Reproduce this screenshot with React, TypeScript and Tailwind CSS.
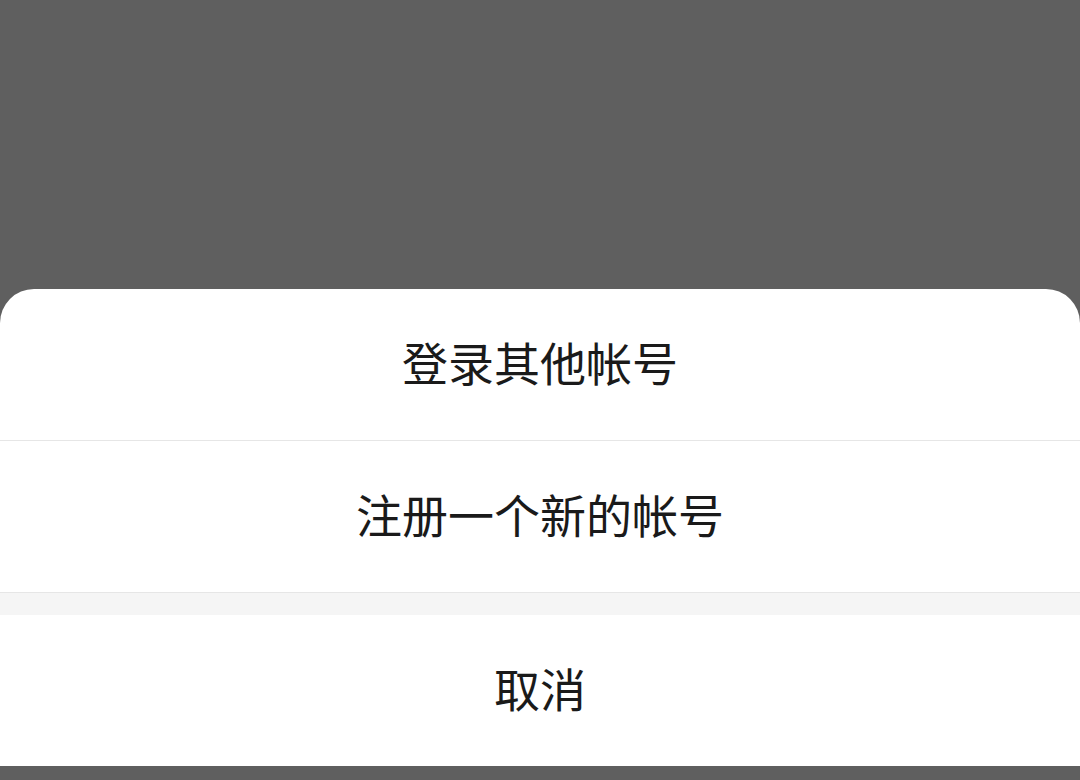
import { useState } from "react";

type Action = { id: string; label: string };

const actions: Action[] = [
  { id: "login", label: "登录其他帐号" },
  { id: "register", label: "注册一个新的帐号" },
];

export default function App() {
  const [picked, setPicked] = useState<string | null>(null);

  return (
    <div
      className="h-[780px] w-full bg-[#5f5f5f] flex flex-col overflow-hidden"
      style={{ fontFamily: '"Noto Sans CJK SC", "Noto Sans", sans-serif' }}
    >
      <div className="h-[289px] shrink-0"></div>

      <div className="bg-white rounded-t-[34px] overflow-hidden">
        {actions.map((a) => (
          <button
            key={a.id}
            onClick={() => setPicked(a.id)}
            className="w-full h-[152px] pb-[7px] flex items-center justify-center border-b border-[#e6e6e6] text-[46px] text-[#1a1a1a] leading-none"
          >
            {a.label}
          </button>
        ))}
        <div className="h-[22px] bg-[#f5f5f5]"></div>
        <button
          onClick={() => setPicked(null)}
          className="w-full h-[151px] pb-[7px] flex items-center justify-center text-[46px] text-[#1a1a1a] leading-none"
        >
          取消
        </button>
      </div>

      <div className="flex-1 bg-[#5f5f5f]" data-picked={picked ?? ""}></div>
    </div>
  );
}
